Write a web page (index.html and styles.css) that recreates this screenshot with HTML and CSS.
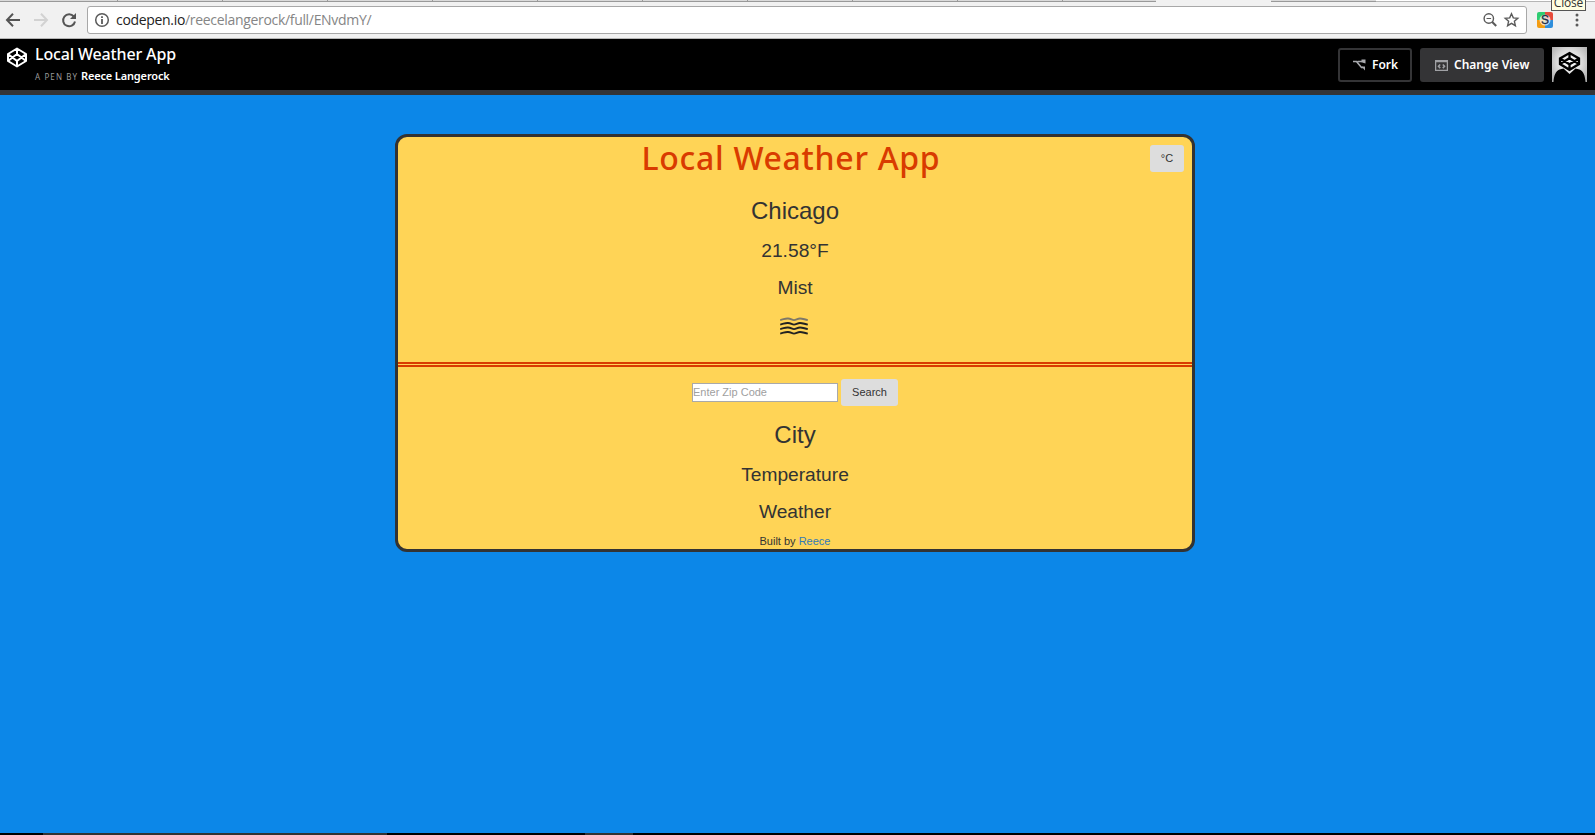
FILE: index.html
```html
<!DOCTYPE html>
<html lang="en">
<head>
<meta charset="utf-8">
<title>Local Weather App</title>
<link rel="stylesheet" href="styles.css">
</head>
<body>
<div class="browser">
  <div class="tabs"><div class="tabs-left"><i></i><i></i><i></i><i></i><i></i><i></i><i></i><i></i><i></i><i></i></div><div class="tab-active"></div><div class="tab-last"></div><div class="tabs-rest"></div></div>
  <div class="toolbar">
    <svg class="nav" width="80" height="20" viewBox="0 0 80 20" fill="none" stroke-width="2">
      <path d="M20 10H7.500M13 3.800L7 10l6 6.200" stroke="#555"/>
      <path d="M34 10h12.500M41 3.800L47 10l-6 6.200" stroke="#d2d2d2"/>
      <path d="M73.800 6.500A6 6 0 1 0 75 11.500" stroke="#555"/>
      <path d="M76 3v6h-6z" fill="#555"/>
    </svg>
    <div class="address">
      <svg width="16" height="16" viewBox="0 0 16 16"><circle cx="8" cy="8" r="6.300" fill="none" stroke="#5a5a5a" stroke-width="1.500"/><path d="M7.100 4.200h1.800v1.800H7.100zM7.100 7h1.800v5H7.100z" fill="#5a5a5a"/></svg>
      <span class="url"><b>codepen.io</b>/reecelangerock/full/ENvdmY/</span>
      <svg class="address-actions" width="38" height="16" viewBox="0 0 38 16" fill="none" stroke="#5a5a5a">
        <circle cx="6.800" cy="6.500" r="4.700" stroke-width="1.400"/><path d="M10.200 10l4 4" stroke-width="2"/><path d="M4.500 6.500h4.600"/>
        <path d="M29.500 1.800l1.800 4.100 4.500.4-3.400 3 1 4.400-3.900-2.400-3.900 2.400 1-4.400-3.400-3 4.500-.4z" stroke-width="1.400"/>
      </svg>
    </div>
    <svg class="extension" width="16" height="16" viewBox="0 0 16 16">
      <path d="M2 0h6v8H0V2a2 2 0 0 1 2-2z" fill="#2ecc71"/><path d="M8 0h6a2 2 0 0 1 2 2v6H8z" fill="#e74c3c"/><path d="M0 8h8v8H2a2 2 0 0 1-2-2z" fill="#f39c12"/><path d="M8 8h8v6a2 2 0 0 1-2 2H8z" fill="#2f8edb"/>
      <circle cx="8" cy="8" r="5.500" fill="#fff" opacity=".7"/><text x="8" y="12.300" text-anchor="middle" class="ext-letter">S</text>
    </svg>
    <svg class="menu" width="4" height="14" viewBox="0 0 4 14" fill="#5a5a5a"><circle cx="2" cy="2" r="1.500"/><circle cx="2" cy="7" r="1.500"/><circle cx="2" cy="12" r="1.500"/></svg>
  </div>
  <div class="tooltip">Close</div>
</div>
<header class="pen-header">
  <svg class="logo" width="22" height="22" viewBox="0 0 22 22" fill="none" stroke="#fff" stroke-width="2" stroke-linejoin="round"><path d="M11 1.500l9 5.500v7L11 19.500 2 14V7zM11 1.500v5.500M11 14v5.500M2 7l9 7 9-7M2 14l9-7 9 7"/></svg>
  <div class="pen-info">
    <h1 class="pen-title">Local Weather App</h1>
    <p class="byline"><span class="by">A PEN BY</span><b>Reece Langerock</b></p>
  </div>
  <button class="btn fork"><svg width="13" height="12" viewBox="0 0 13 12" fill="none" stroke="#a9aaae" stroke-width="1.600"><path d="M0 2.500h3.500l5 6H10M4.500 2.500H9"/><path d="M8.500 .5H12.500v4L8.500 3.300zM8.500 7.500h3.500v4z" fill="#a9aaae" stroke="none"/></svg><span>Fork</span></button>
  <button class="btn view"><svg width="13" height="11" viewBox="0 0 13 11" fill="none" stroke="#a0a1a5"><path d="M.6 .5h11.800v9.900H.6zM.5 1.500h12" stroke-width="1.300"/><path d="M5.200 4.500L3.500 6.300l1.700 1.800M7.800 4.500l1.700 1.800-1.700 1.800" stroke-width="1.600"/></svg><span>Change View</span></button>
  <svg class="avatar" width="35" height="35" viewBox="0 0 35 35">
    <defs><radialGradient id="glow" cx="50%" cy="45%" r="70%"><stop offset="0" stop-color="#fff"/><stop offset=".5" stop-color="#ddd"/><stop offset="1" stop-color="#aaa"/></radialGradient></defs>
    <path fill="url(#glow)" d="M0 0h35v35H0z"/><path d="M1.500 35c.5-7 2-10.500 6-12.500l4-1 6 5.500 6-5.500 4 1c4 2 5.500 5.500 6 12.500z"/>
    <path d="M17.500 6L27 11.500v5.500l-9.500 5.800L8 17v-5.500zM17.500 6v5.200M17.500 17.300v5.200M8 11.500l9.500 5.800 9.500-5.800M8 17l9.500-5.800L27 17" fill="none" stroke="#000" stroke-width="2.300"/>
  </svg>
</header>
<main class="page">
  <section class="card">
    <div class="current">
      <button class="unit">°C</button>
      <h1 class="title">Local Weather App</h1>
      <h2>Chicago</h2>
      <h3>21.58°F</h3>
      <h3>Mist</h3>
      <svg class="mist" width="28" height="18" viewBox="0 0 28 18" fill="none" stroke="#222" stroke-width="1.900"><path stroke="#7e7868" d="M.2 3.100C4 2.300 5 1.300 8 1.500s4 1.600 6 1.600 3.500-1.600 6-1.600 4 .8 7.800 1.600"/><path d="M.2 7.600C4 6.800 5 5.800 8 6s4 1.600 6 1.600S17.500 6 20 6s4 .8 7.800 1.600M.2 12.100c3.800-.8 4.800-1.800 7.800-1.600s4 1.600 6 1.600 3.500-1.600 6-1.600 4 .8 7.800 1.600M.2 16.600c3.800-.8 4.800-1.800 7.800-1.600s4 1.600 6 1.600 3.500-1.600 6-1.600 4 .8 7.800 1.600"/></svg>
    </div>
    <div class="lookup">
      <form class="search"><input type="text" placeholder="Enter Zip Code"><button type="button">Search</button></form>
      <h2>City</h2>
      <h3>Temperature</h3>
      <h3>Weather</h3>
      <footer>Built by <a>Reece</a></footer>
    </div>
  </section>
</main>
<div class="taskbar"><i class="task-wide"></i><i class="task-small"></i></div>
</body>
</html>
```
FILE: styles.css
```css
* { box-sizing: border-box; }
body { margin: 0; height: 835px; overflow: hidden; display: flex; flex-direction: column; background: #0c87e8; color: #333; font-family: "Liberation Sans", Arial, sans-serif; }
h1, h2, h3, p { margin: 0; font-weight: 400; }
button { border: 0; font-family: inherit; color: inherit; padding: 0; }

.browser { position: relative; height: 39px; background: #f1f1f1; border-bottom: 1px solid #b6b6b6; }
.tabs { display: flex; height: 2px; }
.tabs-left { display: flex; width: 1156px; background: #dadada; border-bottom: 1px solid #999; padding-left: 13px; }
.tabs-left i { flex: none; width: 105px; border-right: 1px solid #999; }
.tab-active { width: 115px; }
.tab-last { width: 105px; background: #dadada; border-bottom: 1px solid #999; }
.tabs-rest { flex: 1; background: #fff; border-bottom: 1px solid #b6b6b6; }
.toolbar { display: flex; align-items: center; height: 36px; }
.address { display: flex; align-items: center; width: 1440px; height: 28px; margin-left: 7px; padding: 0 6px; background: #fff; border: 1px solid #a8a8a8; border-radius: 3px; }
.url { margin-left: 6px; font: 14px/20px "Open Sans", sans-serif; color: #858585; letter-spacing: -.32px; }
.url b { font-weight: 400; color: #222; }
.address-actions { margin-left: auto; }
.extension { margin-left: 10px; }
.ext-letter { font: 12px "Liberation Sans", sans-serif; fill: #222d46; stroke: #222d46; stroke-width: .3px; }
.menu { margin-left: 22px; }
.tooltip { position: absolute; top: -8px; left: 1551px; width: 35px; height: 19px; background: #ffffe1; border: 1px solid #555; color: #333; font: 12px/19px "Open Sans", sans-serif; letter-spacing: -.2px; text-align: center; }

.pen-header { display: flex; height: 56px; padding: 8px 8px 0 6px; background: #000; border-bottom: 5px solid #343436; color: #fff; font-family: "Noto Sans", sans-serif; }
.pen-info { flex: 1; margin-left: 7px; }
.pen-title { margin-top: -1px; font-size: 16px; font-weight: 500; line-height: 16px; letter-spacing: -.15px; }
.byline { display: flex; align-items: baseline; margin-top: 7px; font-size: 11px; line-height: 14px; }
.by { width: 46px; font-size: 8px; color: #999; letter-spacing: 1.100px; white-space: nowrap; }
.byline b { font-weight: 600; letter-spacing: -.15px; }
.btn { display: flex; align-items: center; height: 34px; margin-top: 1px; border-radius: 3px; font-size: 12px; font-weight: 600; line-height: 16px; letter-spacing: 0; white-space: nowrap; }
.btn span { margin: -1px 0 0 6px; }
.fork { width: 74px; padding-left: 13px; background: #000; border: 2px solid #343436; }
.view { width: 124px; margin-left: 8px; padding-left: 15px; background: #343436; }
.avatar { margin-left: 8px; }

.page { flex: 1; padding-top: 39px; }
.card { width: 800px; height: 418px; margin-left: 395px; background: #ffd456; border: 3px solid #333; border-radius: 12px; text-align: center; }
.current { position: relative; height: 230px; border-bottom: 5px double #d93b00; }
.unit { position: absolute; top: 8px; right: 8px; width: 34px; height: 27px; padding-bottom: 1px; }
.unit, .search button { background: #ddd; border-radius: 3px; font-size: 11px; }
.title { height: 44px; margin-right: 8px; color: #d93b00; font: 500 32px/42px "Noto Sans", sans-serif; letter-spacing: .7px; }
h2 { font-size: 24px; line-height: 28px; }
.current h2 { margin-top: 16px; }
h3 { font-size: 19.200px; line-height: 22px; margin-top: 15px; }
h2 + h3 { margin-top: 15px; }
.mist { display: block; margin: 18px auto 0 382px; }
.lookup { padding-top: 12px; }
.search { display: flex; justify-content: center; align-items: center; height: 27px; gap: 3px; }
.search input { width: 146px; height: 19px; padding: 0 0 2px; border: 1px solid #a9a9a9; font: 11px "Liberation Sans", sans-serif; }
.search input::placeholder { color: #a0a0a0; }
.search button { width: 57px; height: 27px; padding-bottom: 2px; }
.lookup h2 { margin-top: 15px; }
footer { margin-top: 11px; font-size: 11px; line-height: 14px; }
footer a { color: #337ab7; }
.taskbar { display: flex; height: 2px; background: #000; }
.task-wide { width: 344px; margin-left: 43px; margin-right: 198px; background: #333; }
.task-small { width: 48px; background: #333; }
```
